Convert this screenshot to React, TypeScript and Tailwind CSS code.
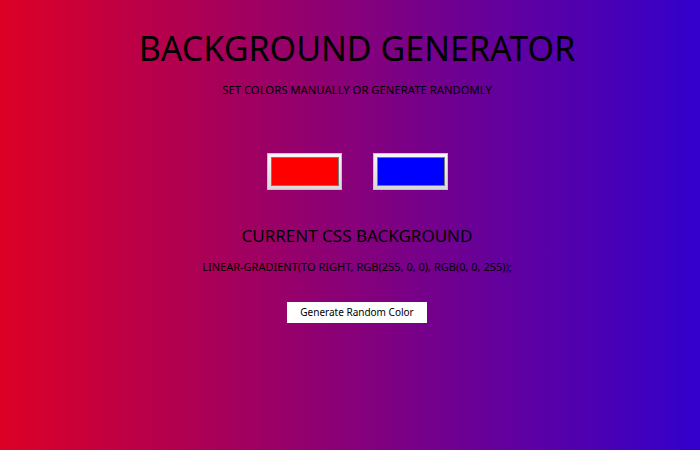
export default function App() {
  return (
    <div
      className="min-h-[450px] w-full bg-[linear-gradient(to_right,#dd0026,#3300cc)] flex flex-col items-center pl-[14px] text-black"
      style={{ fontFamily: '"Noto Sans", Lato, sans-serif' }}
    >
      <h1 className="mt-[28px] text-[34px] leading-[40px] font-normal">BACKGROUND GENERATOR</h1>
      <h3 className="mt-[14px] text-[11.3px] leading-[16px]">SET COLORS MANUALLY OR GENERATE RANDOMLY</h3>

      <div className="mt-[55px] flex gap-[31px]">
        <div className="w-[75px] h-[37px] bg-gradient-to-b from-[#f7f7f7] to-[#d9d9d9] border border-[#c4c4c4] pt-[3px] pb-[3px] pl-[3px] pr-[2px] flex">
          <div className="flex-1 bg-[#ff0000] border border-[#7a7a7a]" />
        </div>
        <div className="w-[75px] h-[37px] bg-gradient-to-b from-[#f7f7f7] to-[#d9d9d9] border border-[#c4c4c4] pt-[3px] pb-[3px] pl-[3px] pr-[2px] flex">
          <div className="flex-1 bg-[#0000ff] border border-[#7a7a7a]" />
        </div>
      </div>

      <h2 className="mt-[34px] text-[17px] leading-[24px]">CURRENT CSS BACKGROUND</h2>
      <p className="mt-[11px] text-[11px] leading-[16px]">LINEAR-GRADIENT(TO RIGHT, RGB(255, 0, 0), RGB(0, 0, 255));</p>

      <button className="mt-[27px] w-[140px] h-[21px] bg-white text-[10px] leading-[21px] text-black">
        Generate Random Color
      </button>
    </div>
  )
}
